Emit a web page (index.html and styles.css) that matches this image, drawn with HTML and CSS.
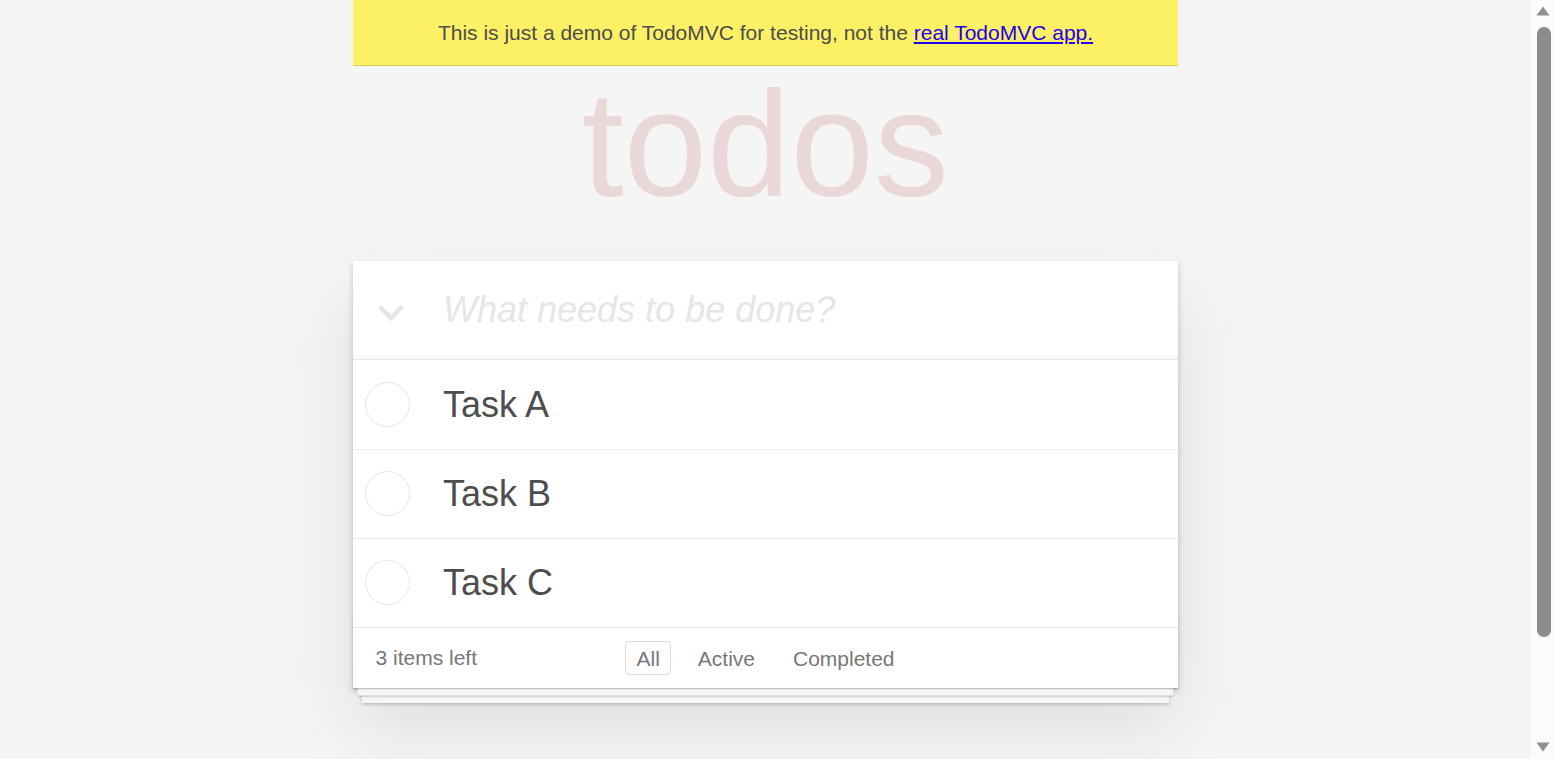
FILE: index.html
```html
<!DOCTYPE html>
<html lang="en">
<head>
<meta charset="utf-8">
<title>React • TodoMVC</title>
<link rel="stylesheet" href="styles.css">
</head>
<body>
<div class="page">
  <div class="demo-banner">This is just a demo of TodoMVC for testing, not the <a href="#" class="demo-link">real TodoMVC app.</a></div>
  <h1 class="title">todos</h1>
  <section class="todoapp">
    <header class="header">
      <span class="toggle-all"><svg width="28" height="18" viewBox="0 0 28 18"><polyline points="2.5,2.5 14,14 25.5,2.5" fill="none" stroke="#e6e6e6" stroke-width="4.5"/></svg></span>
      <input class="new-todo" placeholder="What needs to be done?">
    </header>
    <section class="main">
      <ul class="todo-list">
        <li class="todo"><span class="check"></span><label class="todo-label">Task A</label></li>
        <li class="todo"><span class="check"></span><label class="todo-label">Task B</label></li>
        <li class="todo"><span class="check"></span><label class="todo-label">Task C</label></li>
      </ul>
    </section>
    <footer class="footer">
      <span class="todo-count">3 items left</span>
      <ul class="filters">
        <li><a href="#" class="filter selected">All</a></li>
        <li><a href="#" class="filter">Active</a></li>
        <li><a href="#" class="filter">Completed</a></li>
      </ul>
      <span class="footer-spacer"></span>
    </footer>
  </section>
</div>
<div class="scrollbar">
  <span class="sb-btn sb-up"><svg width="14" height="10" viewBox="0 0 14 10"><polygon points="7,0.5 13.5,9.5 0.5,9.5" fill="#8f8f8f"/></svg></span>
  <span class="sb-thumb"></span>
  <span class="sb-fill"></span>
  <span class="sb-btn sb-down"><svg width="14" height="10" viewBox="0 0 14 10"><polygon points="0.5,0.5 13.5,0.5 7,9.5" fill="#8f8f8f"/></svg></span>
</div>
</body>
</html>
```

FILE: styles.css
```css
html {
  background: #f5f5f5;
  scrollbar-width: none;
}

html::-webkit-scrollbar {
  display: none;
}

body {
  margin: 0;
  padding: 0 23px 0 0;
  min-height: 100vh;
  box-sizing: border-box;
  font-family: "Liberation Sans", Arial, sans-serif;
  font-size: 21px;
  line-height: 29.4px;
  color: #4d4d4d;
}

.page {
  margin: 0 auto;
  max-width: 825px;
  min-width: 345px;
  padding-bottom: 60px;
}

.demo-banner {
  background: #fcf065;
  border-bottom: 1px solid #d8ce55;
  text-align: center;
  padding: 18px 0 17.6px;
  font-size: 21px;
  line-height: 29.4px;
  color: #4d4d4d;
}

.demo-link {
  color: #2200ee;
  text-decoration: underline;
}

.title {
  margin: 3px 0 0;
  height: 150px;
  font-size: 150px;
  line-height: 150px;
  font-weight: 400;
  text-align: center;
  color: rgba(175, 47, 47, 0.15);
}

.todoapp {
  background: #fff;
  margin: 42px 0 0;
  position: relative;
  box-shadow: 0 3px 6px 0 rgba(0, 0, 0, 0.2), 0 37.5px 75px 0 rgba(0, 0, 0, 0.1);
}

.header {
  display: flex;
  align-items: center;
  height: 98.4px;
  box-shadow: inset 0 -3px 1.5px rgba(0, 0, 0, 0.03);
}

.toggle-all {
  flex: none;
  width: 90px;
  box-sizing: border-box;
  padding: 6px 0 0 24px;
  display: flex;
  align-items: center;
}

.new-todo {
  flex: 1;
  min-width: 0;
  border: 0;
  outline: none;
  background: transparent;
  padding: 0;
  margin: 0;
  font-family: "Liberation Sans", Arial, sans-serif;
  font-size: 36px;
  font-style: italic;
  line-height: 50.4px;
  color: #4d4d4d;
}

.new-todo::placeholder {
  color: #e6e6e6;
  font-style: italic;
}

.main {
  border-top: 1px solid #e6e6e6;
}

.todo-list {
  list-style: none;
  margin: 0;
  padding: 0;
}

.todo {
  display: flex;
  align-items: center;
  padding-left: 12px;
  border-bottom: 1px solid #ededed;
}

.todo:last-child {
  border-bottom: none;
}

.check {
  flex: none;
  width: 45px;
  height: 45px;
  box-sizing: border-box;
  border: 1px solid #e6e6e6;
  border-radius: 50%;
}

.todo-label {
  margin-left: 33px;
  padding: 22.5px 0;
  font-size: 36px;
  line-height: 43.2px;
  color: #4d4d4d;
}

.footer {
  position: relative;
  display: grid;
  grid-template-columns: 1fr auto 1fr;
  align-items: center;
  height: 30px;
  padding: 15px 22.5px;
  border-top: 1px solid #e6e6e6;
  color: #777;
  font-size: 21px;
  line-height: 29.4px;
}

.footer::before {
  content: "";
  position: absolute;
  left: 0;
  right: 0;
  bottom: 0;
  height: 75px;
  overflow: hidden;
  box-shadow: 0 1.5px 1.5px rgba(0, 0, 0, 0.2),
    0 12px 0 -4.5px #f6f6f6,
    0 13.5px 1.5px -4.5px rgba(0, 0, 0, 0.2),
    0 24px 0 -9px #f6f6f6,
    0 25.5px 3px -9px rgba(0, 0, 0, 0.2);
}

.todo-count {
  text-align: left;
}

.filters {
  display: flex;
  gap: 6px;
  list-style: none;
  margin: 0;
  padding: 0;
}

.filter {
  color: inherit;
  text-decoration: none;
  margin: 0 4.5px;
  padding: 4.5px 10.5px;
  border: 1px solid transparent;
  border-radius: 4.5px;
}

.filter.selected {
  border-color: rgba(175, 47, 47, 0.2);
}

.scrollbar {
  position: fixed;
  top: 0;
  right: 0;
  bottom: 0;
  width: 23px;
  background: #fbfbfb;
  display: flex;
  flex-direction: column;
  align-items: center;
}

.sb-btn {
  flex: none;
  height: 23px;
  width: 23px;
  display: flex;
  justify-content: center;
  padding-left: 1px;
  box-sizing: border-box;
}

.sb-up {
  align-items: flex-start;
  padding-top: 6px;
}

.sb-down {
  align-items: flex-end;
  padding-bottom: 7px;
}

.sb-thumb {
  flex: none;
  margin-top: 4px;
  margin-left: 2px;
  width: 14px;
  height: 610px;
  border-radius: 7px;
  background: #8c8c8c;
}

.sb-fill {
  flex: 1;
}
```
